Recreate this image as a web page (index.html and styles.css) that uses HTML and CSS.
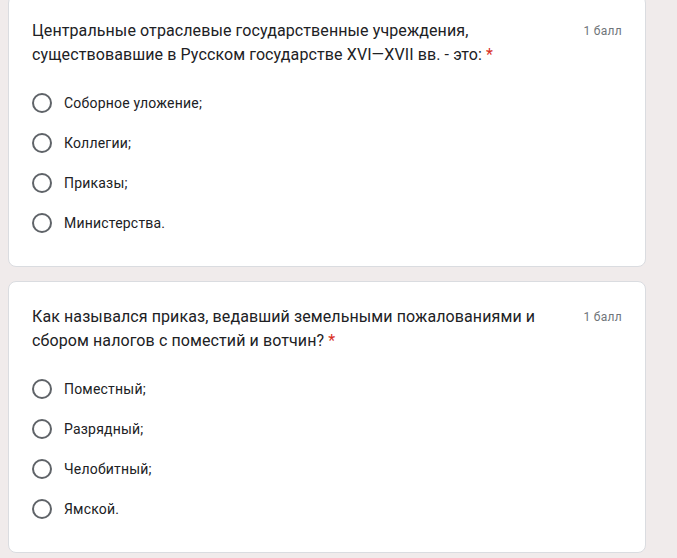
FILE: index.html
```html
<!DOCTYPE html>
<html lang="ru">
<head>
<meta charset="utf-8">
<link rel="stylesheet" href="styles.css">
</head>
<body>
<div class="list">
  <div class="card">
    <div class="head">
      <div class="title">Центральные отраслевые государственные учреждения, существовавшие в Русском государстве XVI—XVII вв. - это: <span class="req">*</span></div>
      <div class="points">1 балл</div>
    </div>
    <div class="options">
      <div class="opt"><span class="radio"></span><span class="label">Соборное уложение;</span></div>
      <div class="opt"><span class="radio"></span><span class="label">Коллегии;</span></div>
      <div class="opt"><span class="radio"></span><span class="label">Приказы;</span></div>
      <div class="opt"><span class="radio"></span><span class="label">Министерства.</span></div>
    </div>
  </div>
  <div class="card">
    <div class="head">
      <div class="title">Как назывался приказ, ведавший земельными пожалованиями и сбором налогов с поместий и вотчин? <span class="req">*</span></div>
      <div class="points">1 балл</div>
    </div>
    <div class="options">
      <div class="opt"><span class="radio"></span><span class="label">Поместный;</span></div>
      <div class="opt"><span class="radio"></span><span class="label">Разрядный;</span></div>
      <div class="opt"><span class="radio"></span><span class="label">Челобитный;</span></div>
      <div class="opt"><span class="radio"></span><span class="label">Ямской.</span></div>
    </div>
  </div>
</div>
</body>
</html>
```

FILE: styles.css
```css
html, body {
  margin: 0;
  padding: 0;
  background: #f0ebeb;
  font-family: Roboto, "Noto Sans", Arial, sans-serif;
  color: #202124;
}
.list {
  display: flex;
  flex-direction: column;
  gap: 14px;
  width: 638px;
  margin: -5px 0 0 8px;
}
.card {
  background: #fff;
  border: 1px solid #dadce0;
  border-radius: 8px;
  padding: 23px 23px 23px 23px;
}
.head {
  display: flex;
  align-items: flex-start;
  gap: 16px;
}
.title {
  flex: 1;
  font-size: 16px;
  line-height: 24px;
  letter-spacing: 0.1px;
  color: #202124;
}
.req {
  color: #d93025;
}
.points {
  font-size: 12px;
  line-height: 24px;
  color: #70757a;
  letter-spacing: 0.3px;
  white-space: nowrap;
}
.options {
  margin-top: 16px;
  display: flex;
  flex-direction: column;
}
.opt {
  height: 40px;
  display: flex;
  align-items: center;
  gap: 12px;
}
.radio {
  width: 20px;
  height: 20px;
  box-sizing: border-box;
  border: 2px solid #5f6368;
  border-radius: 50%;
  flex: none;
}
.label {
  font-size: 14px;
  letter-spacing: 0.2px;
  color: #202124;
}
```
